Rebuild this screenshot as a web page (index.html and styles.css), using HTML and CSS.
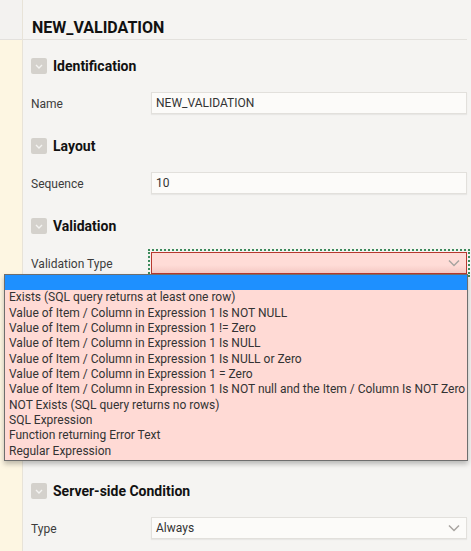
FILE: index.html
```html
<!DOCTYPE html>
<html lang="en">
<head>
<meta charset="utf-8">
<title>NEW_VALIDATION</title>
<link rel="stylesheet" href="styles.css">
</head>
<body>
<div class="page">
  <aside class="gutter">
    <div class="gutter-top"></div>
    <div class="gutter-body"></div>
  </aside>
  <main class="editor">
    <header class="editor-head">
      <h1 class="editor-title">NEW_VALIDATION</h1>
    </header>

    <section class="group">
      <div class="group-head">
        <span class="toggle"><svg viewBox="0 0 16 16" width="16" height="16"><path d="M5 7l3 3 3-3" fill="none" stroke="#f4f3f1" stroke-width="1.4"/></svg></span>
        <h2 class="group-title">Identification</h2>
      </div>
      <div class="field">
        <label class="field-label">Name</label>
        <div class="input">NEW_VALIDATION</div>
      </div>
    </section>

    <section class="group">
      <div class="group-head">
        <span class="toggle"><svg viewBox="0 0 16 16" width="16" height="16"><path d="M5 7l3 3 3-3" fill="none" stroke="#f4f3f1" stroke-width="1.4"/></svg></span>
        <h2 class="group-title">Layout</h2>
      </div>
      <div class="field">
        <label class="field-label">Sequence</label>
        <div class="input">10</div>
      </div>
    </section>

    <section class="group">
      <div class="group-head">
        <span class="toggle"><svg viewBox="0 0 16 16" width="16" height="16"><path d="M5 7l3 3 3-3" fill="none" stroke="#f4f3f1" stroke-width="1.4"/></svg></span>
        <h2 class="group-title">Validation</h2>
      </div>
      <div class="field">
        <label class="field-label">Validation Type</label>
        <div class="input select select-error">
          <span></span>
          <svg class="chev" viewBox="0 0 12 8" width="12" height="8"><path d="M1 1.5l5 5 5-5" fill="none" stroke="#a8a4a0" stroke-width="1.5"/></svg>
        </div>
      </div>
      <div class="field field-tall">
        <span class="field-label"></span>
        <div class="input textarea"></div>
      </div>
    </section>

    <section class="group">
      <div class="group-head">
        <span class="toggle"><svg viewBox="0 0 16 16" width="16" height="16"><path d="M5 7l3 3 3-3" fill="none" stroke="#f4f3f1" stroke-width="1.4"/></svg></span>
        <h2 class="group-title">Server-side Condition</h2>
      </div>
      <div class="field">
        <label class="field-label">Type</label>
        <div class="input select">
          <span>Always</span>
          <svg class="chev" viewBox="0 0 12 8" width="12" height="8"><path d="M1 1.5l5 5 5-5" fill="none" stroke="#a8a4a0" stroke-width="1.5"/></svg>
        </div>
      </div>
    </section>
  </main>

  <ul class="listbox">
    <li class="option option-active">&nbsp;</li>
    <li class="option">Exists (SQL query returns at least one row)</li>
    <li class="option">Value of Item / Column in Expression 1 Is NOT NULL</li>
    <li class="option">Value of Item / Column in Expression 1 != Zero</li>
    <li class="option">Value of Item / Column in Expression 1 Is NULL</li>
    <li class="option">Value of Item / Column in Expression 1 Is NULL or Zero</li>
    <li class="option">Value of Item / Column in Expression 1 = Zero</li>
    <li class="option">Value of Item / Column in Expression 1 Is NOT null and the Item / Column Is NOT Zero</li>
    <li class="option">NOT Exists (SQL query returns no rows)</li>
    <li class="option">SQL Expression</li>
    <li class="option">Function returning Error Text</li>
    <li class="option">Regular Expression</li>
  </ul>
</div>
</body>
</html>
```

FILE: styles.css
```css
* {
  box-sizing: border-box;
}

html, body {
  margin: 0;
  padding: 0;
  height: 100%;
  overflow: hidden;
}

body {
  background: #f5f4f2;
  font-family: Roboto, "Liberation Sans", sans-serif;
  color: #3a3a3a;
}

.page {
  position: relative;
  display: flex;
  height: 551px;
}

/* left gutter */
.gutter {
  width: 23px;
  flex: none;
  display: flex;
  flex-direction: column;
  border-right: 1px solid #e8e3d8;
}

.gutter-top {
  height: 40px;
  background: #f3f2f0;
  border-bottom: 1px solid #e3e1dd;
}

.gutter-body {
  flex: 1;
  background: #fdf6e2;
}

/* editor column */
.editor {
  flex: 1;
  padding-right: 4px;
}

.editor-head {
  height: 40px;
  border-bottom: 1px solid #e3e1dd;
  display: flex;
  align-items: flex-end;
  padding: 0 0 1px 9px;
}

.editor-title {
  margin: 0;
  font-size: 16px;
  font-weight: 700;
  color: #111;
  line-height: 20px;
}

.editor-head + .group {
  margin-top: 9px;
}

.group {
  padding: 0 0 15px 8px;
}

.group-head {
  height: 33px;
  display: flex;
  align-items: center;
  gap: 6px;
}

.toggle {
  width: 16px;
  height: 16px;
  border-radius: 2px;
  background: #d4d1cc;
  display: flex;
}

.group-title {
  margin: 0;
  font-size: 14px;
  font-weight: 700;
  color: #111;
}

.field {
  display: flex;
  align-items: center;
  margin-top: 10px;
  height: 22px;
}

.field-tall {
  height: 175px;
  align-items: flex-start;
}

.field-label {
  width: 120px;
  flex: none;
  font-size: 12px;
  color: #3c3c3c;
  padding-top: 1px;
}

.input {
  flex: 1;
  height: 22px;
  background: #fcfbf9;
  border: 1px solid #e2e0dc;
  box-shadow: 0 1px 1px rgba(0, 0, 0, 0.05);
  font-size: 12px;
  color: #333;
  padding: 0 4px;
  display: flex;
  align-items: center;
}

.textarea {
  height: 175px;
}

.select {
  justify-content: space-between;
  padding-right: 6px;
}

.chev {
  display: block;
}

.select-error {
  background: linear-gradient(#ffdcd7 60%, #f4c9c3);
  border-color: #b8392f;
  outline: 2px dotted #3c8a5c;
  outline-offset: 1px;
}

/* open option list of the validation type select */
.listbox {
  position: absolute;
  left: 4px;
  top: 274px;
  width: 464px;
  margin: 0;
  padding: 0 0 1px;
  list-style: none;
  background: #ffdad5;
  border: 1px solid #6e6e6e;
  box-shadow: 0 3px 5px rgba(0, 0, 0, 0.25);
}

.option {
  font-size: 12px;
  line-height: 15.35px;
  padding-left: 4px;
  color: #333;
  white-space: nowrap;
}

.option-active {
  background: #1e90ff;
}
```
